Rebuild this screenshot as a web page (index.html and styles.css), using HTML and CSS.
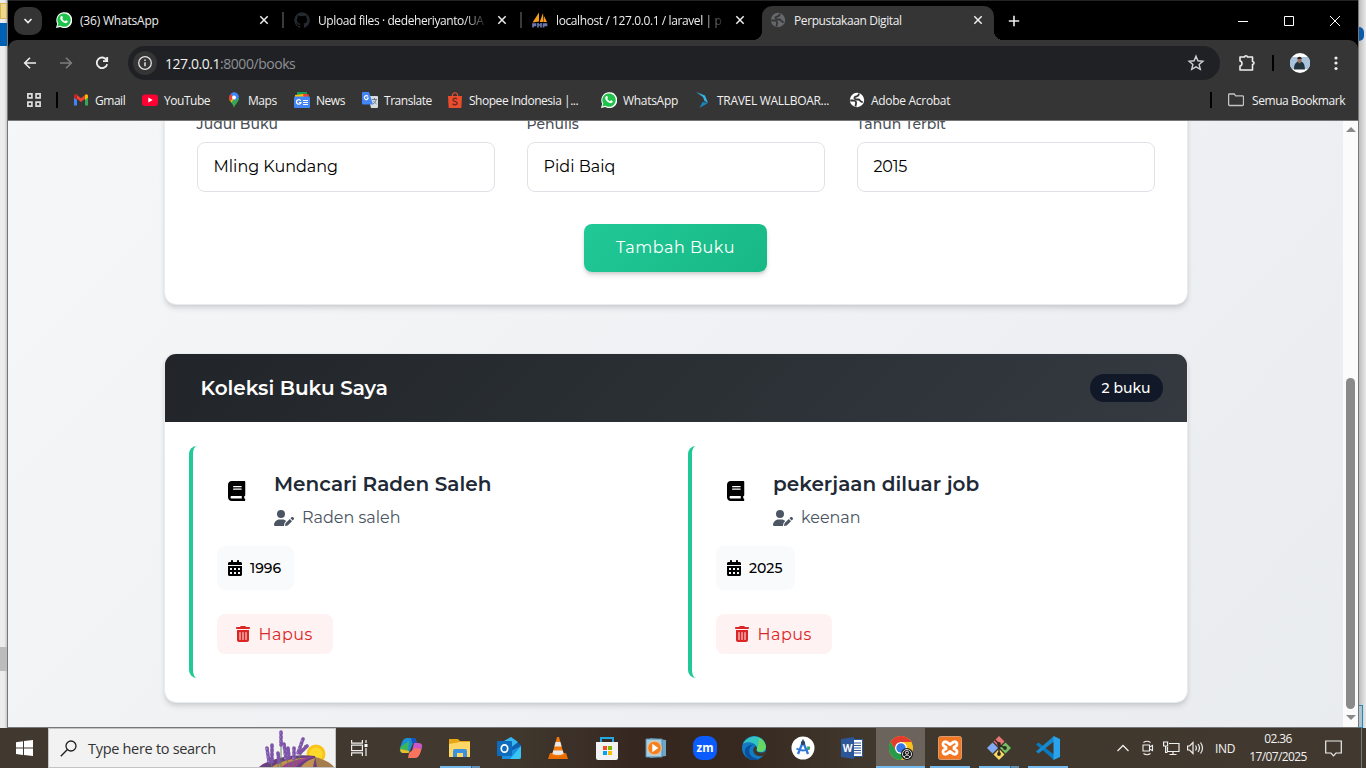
FILE: index.html
```html
<!DOCTYPE html>
<html lang="id">
<head>
<meta charset="utf-8">
<title>Perpustakaan Digital</title>
<link rel="stylesheet" href="styles.css">
</head>
<body>
<svg class="defs" width="0" height="0">
  <symbol id="book" viewBox="0 0 448 512"><path d="M96 0C43 0 0 43 0 96V416c0 53 43 96 96 96H384h32c17.700 0 32-14.300 32-32s-14.300-32-32-32V384c17.700 0 32-14.300 32-32V32c0-17.700-14.300-32-32-32H384 96zm0 384H352v64H96c-17.700 0-32-14.300-32-32s14.300-32 32-32zm32-240c0-8.800 7.200-16 16-16H336c8.800 0 16 7.200 16 16s-7.200 16-16 16H144c-8.800 0-16-7.200-16-16zm16 48H336c8.800 0 16 7.200 16 16s-7.200 16-16 16H144c-8.800 0-16-7.200-16-16s7.200-16 16-16z"/></symbol>
  <symbol id="user-pen" viewBox="0 0 640 512"><path d="M224 256A128 128 0 1 0 224 0a128 128 0 1 0 0 256zm-45.700 48C79.800 304 0 383.800 0 482.300C0 498.700 13.300 512 29.700 512H322.800c-3.100-8.800-3.700-18.400-1.400-27.800l15-60.100c2.800-11.300 8.600-21.500 16.800-29.700l40.300-40.300c-32.100-31-75.700-50.100-123.900-50.100H178.300zm435.500-68.300c-15.600-15.600-40.900-15.600-56.600 0l-29.400 29.400 71 71 29.400-29.400c15.600-15.600 15.600-40.900 0-56.600l-14.400-14.400zM375.900 417c-4.100 4.100-7 9.200-8.400 14.900l-15 60.100c-1.400 5.500 .2 11.200 4.200 15.200s9.700 5.600 15.200 4.200l60.100-15c5.600-1.400 10.800-4.300 14.900-8.400L576.100 358.700l-71-71L375.900 417z"/></symbol>
  <symbol id="calendar" viewBox="0 0 448 512"><path fill-rule="evenodd" d="M128 0c17.700 0 32 14.300 32 32V64H288V32c0-17.700 14.300-32 32-32s32 14.300 32 32V64h48c26.500 0 48 21.500 48 48v48H0V112C0 85.500 21.500 64 48 64H96V32c0-17.700 14.300-32 32-32zM0 192H448V464c0 26.500-21.500 48-48 48H48c-26.500 0-48-21.500-48-48V192zM64 256h64v64H64zM192 256h64v64h-64zM320 256h64v64h-64zM64 384h64v64H64zM192 384h64v64h-64zM320 384h64v64h-64z"/></symbol>
  <symbol id="trash" viewBox="0 0 448 512"><path fill-rule="evenodd" d="M135.200 17.700C140.600 6.800 151.700 0 163.800 0H284.200c12.100 0 23.200 6.800 28.600 17.700L320 32h96c17.700 0 32 14.300 32 32s-14.300 32-32 32H32C14.300 96 0 81.700 0 64S14.300 32 32 32h96zM32 128H416V448c0 35.300-28.700 64-64 64H96c-35.300 0-64-28.700-64-64zM112 208v224a16 16 0 0 0 32 0V208a16 16 0 0 0-32 0zM208 208v224a16 16 0 0 0 32 0V208a16 16 0 0 0-32 0zM304 208v224a16 16 0 0 0 32 0V208a16 16 0 0 0-32 0z"/></symbol>
  <symbol id="whatsapp" viewBox="0 0 16 16"><path fill="#fff" d="M0 16l1.200-4.200A8 8 0 1 1 4.200 15z"/><path fill="#1fc24a" d="M1.400 14.600l.9-3A6.700 6.700 0 1 1 4.500 13.800z"/><path fill="#fff" d="M5.300 4.100c.5-.3.900-.2 1.100.3l.5 1.200c.1.400-.5.900-.6 1.200.5 1.100 1.400 1.900 2.600 2.400.4 0 .8-1 1.200-.9l1.400.7c.5.300.1 1.400-.5 1.800-.7.500-1.700.5-2.800 0C6.300 9.900 4.800 8.300 4.300 6.800c-.3-1.100.2-2.200 1-2.700z"/></symbol>
  <symbol id="globe" viewBox="0 0 16 16"><circle cx="8" cy="8" r="7.200" fill="currentColor"/><path fill="none" stroke="var(--hole)" stroke-width="1.800" stroke-linejoin="round" d="M9.500 1.500c1 2-1 2.500-3 3.200C5 5.200 5 7 7 7.500h2.500c1.500 0 1.500 2.500 4.200 2.500M1.200 8.500h3.300c2 .5 3 1.500 2.500 3L6.500 14.500"/></symbol>
  <symbol id="close" viewBox="0 0 12 12"><path stroke="#eee" stroke-width="1.500" d="M2.300 2.300l7.400 7.400M9.700 2.300L2.300 9.700"/></symbol>
</svg>

<div class="workspace">
  <div class="behind behind-left"><i class="behind-folder"></i><i class="behind-blue"></i><i class="behind-gray"></i></div>

  <div class="window">
    <div class="tabstrip">
      <div class="tab-search"><svg width="12" height="12" viewBox="0 0 12 12"><path d="M2.500 4l3.500 3.500L9.500 4" fill="none" stroke="#eee" stroke-width="1.700"/></svg></div>
      <div class="tab"><svg class="i16"><use href="#whatsapp"/></svg><span class="tab-title chat">(36) WhatsApp</span><svg class="i12"><use href="#close"/></svg></div>
      <div class="tab"><svg class="i16" viewBox="0 0 16 16"><path fill="#24292f" d="M8 .3a8 8 0 0 0-2.500 15.500c.4.100.5-.2.500-.4v-1.500c-2.200.5-2.700-.9-2.700-.9-.4-.9-.9-1.200-.9-1.200-.7-.5.100-.5.100-.5.800.100 1.200.8 1.200.8.700 1.200 1.900.9 2.300.7.100-.5.300-.9.500-1.100-1.800-.2-3.600-.9-3.600-3.900 0-.9.300-1.600.8-2.200 0-.2-.3-1 .1-2.100 0 0 .7-.2 2.200.8a7.500 7.500 0 0 1 4 0c1.500-1 2.200-.8 2.200-.8.400 1.100.1 1.900.1 2.100.5.600.8 1.300.8 2.200 0 3-1.900 3.700-3.600 3.900.3.300.5.800.5 1.500v2.200c0 .2.100.5.600.4A8 8 0 0 0 8 .3z"/></svg><span class="tab-title fade">Upload files · dedeheriyanto/UA</span><svg class="i12"><use href="#close"/></svg></div>
      <div class="tab last"><svg class="i16" viewBox="0 0 16 16"><path fill="#f89c1c" d="M7 .5L.5 10.500 7 9.500zM11 1L7.700 10h4zM12 4v6h3z"/><path fill="none" stroke="#6c78af" stroke-width="1.700" d="M1 15.500v-3.500h2.500v1.500H1M6 11v4.500M6 13h3v2.500M9 13v-2M11.500 15.500v-3.500h3v1.500h-3"/></svg><span class="tab-title fade">localhost / 127.0.0.1 / laravel | p</span><svg class="i12"><use href="#close"/></svg></div>
      <div class="tab active"><svg class="i16 globe-dim"><use href="#globe"/></svg><span class="tab-title">Perpustakaan Digital</span><svg class="i12"><use href="#close"/></svg></div>
      <svg class="new-tab" width="12" height="12" viewBox="0 0 12 12"><path stroke="#eee" stroke-width="1.600" d="M6 .8v10.400M.8 6h10.400"/></svg>
      <div class="controls">
        <svg width="12" height="12" viewBox="0 0 12 12"><path stroke="#fff" d="M1 6.500h10"/></svg>
        <svg width="12" height="12" viewBox="0 0 12 12"><path fill="none" stroke="#fff" d="M1.500 1.500h9v9h-9z"/></svg>
        <svg width="12" height="12" viewBox="0 0 12 12"><path stroke="#fff" d="M1 1l10 10M11 1L1 11"/></svg>
      </div>
    </div>

    <div class="chrome">
      <div class="toolbar">
        <div class="nav">
          <svg width="16" height="16" viewBox="0 0 16 16"><path fill="none" stroke="#eee" stroke-width="1.600" d="M14 8H3M8 2.700L2.700 8 8 13.300"/></svg>
          <svg width="16" height="16" viewBox="0 0 16 16"><path fill="none" stroke="#7d7d7d" stroke-width="1.600" d="M2 8h11M8 2.700L13.300 8 8 13.300"/></svg>
          <svg width="16" height="16" viewBox="0 0 16 16"><path fill="none" stroke="#eee" stroke-width="1.800" d="M12.600 5A5.300 5.300 0 1 0 13.200 9.200M13.200 2v4.200H9"/></svg>
        </div>
        <div class="omnibox">
          <span class="info"><svg width="16" height="16" viewBox="0 0 16 16"><circle cx="8" cy="8" r="6.300" fill="none" stroke="#e3e3e3" stroke-width="1.300"/><path stroke="#e3e3e3" stroke-width="1.500" d="M8 7.200v4M8 4.500V6"/></svg></span>
          <span class="url">127.0.0.1<span>:8000/books</span></span>
          <svg width="18" height="18" viewBox="0 0 18 18"><path fill="none" stroke="#d0d0d0" stroke-width="1.400" d="M9 2.200l1.900 4.600 5 .4-3.800 3.300 1.200 4.900L9 12.800l-4.300 2.600 1.200-4.900L2.100 7.200l5-.4z"/></svg>
        </div>
        <svg class="ext" width="18" height="18" viewBox="0 0 18 18"><path fill="none" stroke="#eee" stroke-width="1.600" stroke-linejoin="round" d="M2 3h4.500c.3-1.700 2.700-1.700 3 0H14.500v4.500c2 .3 2 2.700 0 3V16H2v-4c2.600-.3 2.600-4.700 0-5z"/></svg>
        <i class="sep"></i>
        <svg class="avatar" width="20" height="20" viewBox="0 0 20 20"><circle cx="10" cy="10" r="10" fill="#fff"/><path fill="#a9c3dc" d="M2 4h16a10 10 0 0 1 0 12H2a10 10 0 0 1 0-12z"/><path fill="#24343d" d="M4 16.500c0-5 1.500-7 4-8h3c3 1 3.500 3 4 8z"/><path fill="#9c7062" d="M7.500 5h4v3.500l-2 2-2-2z"/><path fill="#2b2224" d="M7.300 6c0-3 4.400-3 4.400 0z"/></svg>
        <svg class="menu" width="4" height="16" viewBox="0 0 4 16" fill="#eee"><circle cx="2" cy="3" r="1.600"/><circle cx="2" cy="8" r="1.600"/><circle cx="2" cy="13.500" r="1.600"/></svg>
      </div>
      <div class="bookmarks">
        <svg class="apps" width="14" height="14" viewBox="0 0 14 14"><path fill="none" stroke="#ddd" stroke-width="1.700" d="M.9.900h4v4h-4zM9.100.900h4v4h-4zM.9 9.100h4v4h-4zM9.100 9.100h4v4h-4z"/></svg>
        <i class="sep"></i>
        <div class="bm-list">
          <span class="bm"><svg class="i16" viewBox="0 0 16 16"><path fill="#4285f4" d="M1 4v9.500h3V7z"/><path fill="#34a853" d="M15 4v9.500h-3V7z"/><path fill="#ea4335" d="M1 4.500C1 2.500 2.500 2 4 3l4 3.200L12 3c1.500-1 3-.5 3 1.500L8 10z"/><path fill="#fbbc04" d="M12 3c1.500-1 3-.5 3 1.500v1L12 8z"/><path fill="#c5221f" d="M1 4.500C1 2.500 2.500 2 4 3v5L1 5.700z"/></svg>Gmail</span>
          <span class="bm"><svg class="i16" viewBox="0 0 16 16"><rect y="2.500" width="16" height="11.500" rx="3" fill="#ff0033"/><path fill="#fff" d="M6.300 5.500v5L10.700 8z"/></svg>YouTube</span>
          <span class="bm"><svg class="i16" viewBox="0 0 16 16"><path fill="#34a853" d="M3 7c1 3 4 4.500 5 9 1-4 5-6 5-10z"/><path fill="#fbbc04" d="M3.200 7.500l6-3L5.500 10.500z"/><path fill="#ea4335" d="M3 6c0-2 .5-3 1.700-4L8.500 5 4 9.500z"/><path fill="#4285f4" d="M4.700 2C7-1 12.500 0 13 5l-3.600 4L6 4z"/><circle cx="8" cy="5.500" r="2" fill="#fff"/></svg>Maps</span>
          <span class="bm"><svg class="i16" viewBox="0 0 16 16"><path fill="#0f9d58" d="M3 0h10v6H3z"/><path fill="#ea4335" d="M9 1.500l6 1-1 5H8z"/><path fill="#fbbc04" d="M1 3l8-1 1 5H1z"/><rect y="4.500" width="16" height="11.500" rx="1" fill="#4285f4"/><path fill="none" stroke="#fff" stroke-width="1.200" d="M6.800 8.800A2.300 2.300 0 1 0 7 10.500H5M9 8.500h5M9 10.500h5M9 12.500h5"/></svg>News</span>
          <span class="bm"><svg class="i16" viewBox="0 0 16 16"><path fill="#d8dce1" d="M6 4h9a1 1 0 0 1 1 1v10a1 1 0 0 1-1 1H9z"/><path fill="#4285f4" d="M1 0h6l4 12.500H1a1 1 0 0 1-1-1V1a1 1 0 0 1 1-1z"/><path fill="none" stroke="#fff" stroke-width="1.100" d="M6 4.500A2 2 0 1 0 6.300 6H4.600"/><path fill="none" stroke="#667a8c" d="M10 7.500h5M12.500 6v1.500M14 8c-.5 2-1.500 3-3 4M11.500 9c.5 1 1.500 2 3 3"/></svg>Translate</span>
          <span class="bm"><svg class="i16" viewBox="0 0 16 16"><path fill="#ee4d2d" d="M1 4h14l-.7 12H1.700z"/><path fill="none" stroke="#ee4d2d" stroke-width="1.200" d="M5.300 4.500c0-5 5.400-5 5.400 0"/><path fill="none" stroke="#6d2b22" stroke-width="1.400" d="M10 7c-2-1.500-4.200-.5-4 .8.200 1.700 4 1.300 4.200 3.200.2 1.800-2.700 2.500-4.700.9"/></svg>Shopee Indonesia |...</span>
          <span class="bm loose"><svg class="i16"><use href="#whatsapp"/></svg>WhatsApp</span>
          <span class="bm loose"><svg class="i16" viewBox="0 0 16 16"><path fill="#35b4e5" d="M1 0l9 3.500 3 7.500-3.500-2L8 5z"/><path fill="#1687bd" d="M13 11l-8.500 5 3-6z"/></svg>TRAVEL WALLBOAR...</span>
          <span class="bm loose"><svg class="i16 globe-white"><use href="#globe"/></svg>Adobe Acrobat</span>
        </div>
        <i class="sep"></i>
        <span class="bm all"><svg width="16" height="14" viewBox="0 0 16 14"><path fill="none" stroke="#c4c4c4" stroke-width="1.300" d="M1.500 1h4.700l1.500 1.800h6.800q1 0 1 1v7.700q0 1-1 1h-13q-.9 0-.9-1V2q0-1 .9-1z"/></svg>Semua Bookmark</span>
      </div>
    </div>

    <div class="viewport">
      <main class="page">
        <section class="card form-card">
          <div class="fields">
            <label class="field"><span>Judul Buku</span><div class="input">Mling Kundang</div></label>
            <label class="field"><span>Penulis</span><div class="input">Pidi Baiq</div></label>
            <label class="field"><span>Tahun Terbit</span><div class="input year-input">2015</div></label>
          </div>
          <div class="add">Tambah Buku</div>
        </section>

        <section class="card">
          <header class="card-head"><h2>Koleksi Buku Saya</h2><span class="count">2 buku</span></header>
          <div class="books">
            <article class="book">
              <div class="book-top">
                <svg class="book-icon"><use href="#book"/></svg>
                <div><h3>Mencari Raden Saleh</h3><p><svg class="pen"><use href="#user-pen"/></svg>Raden saleh</p></div>
              </div>
              <div class="year"><svg class="fa16"><use href="#calendar"/></svg>1996</div>
              <div class="delete"><svg class="fa16"><use href="#trash"/></svg>Hapus</div>
            </article>
            <article class="book">
              <div class="book-top">
                <svg class="book-icon"><use href="#book"/></svg>
                <div><h3>pekerjaan diluar job</h3><p><svg class="pen"><use href="#user-pen"/></svg>keenan</p></div>
              </div>
              <div class="year wide"><svg class="fa16"><use href="#calendar"/></svg>2025</div>
              <div class="delete"><svg class="fa16"><use href="#trash"/></svg>Hapus</div>
            </article>
          </div>
        </section>
      </main>
      <div class="scrollbar">
        <svg width="10" height="5" viewBox="0 0 10 5"><path fill="#8a8a8a" d="M0 5l5-5 5 5z"/></svg>
        <i class="thumb"></i>
        <svg width="10" height="5" viewBox="0 0 10 5"><path fill="#8a8a8a" d="M0 0h10L5 5z"/></svg>
      </div>
    </div>
  </div>

  <div class="behind behind-right"><i class="behind-dot"></i><i class="behind-frame"></i></div>
</div>

<div class="taskbar">
  <div class="start"><svg width="17" height="16" viewBox="0 0 17 16"><path fill="#fff" d="M0 2.200l7-1v6.400H0zM8 1l9-1v7.600H8zM0 8.600h7V15l-7-1zM8 8.600h9V16l-9-1z"/></svg></div>
  <div class="search">
    <svg width="17" height="17" viewBox="0 0 17 17"><circle cx="11" cy="6" r="5" fill="none" stroke="#222" stroke-width="1.300"/><path stroke="#222" stroke-width="1.400" d="M7.400 9.600L.8 16.200"/></svg>
    <span>Type here to search</span>
    <svg class="lavender" width="76" height="38" viewBox="0 0 76 38">
      <circle cx="57" cy="25" r="9.500" fill="#f9c51b"/><circle cx="57" cy="25" r="6.500" fill="#fdda2a"/>
      <path fill="#a57c4b" d="M36 38c6-10 18-12 26-8 6 2 11 5 13 8z"/>
      <path fill="#68407f" d="M0 38c10-9 36-14 56-11l2 11z"/>
      <path fill="#a03f96" d="M24 38c6-6 18-10 31-10-9 2-15 6-18 10z"/><path fill="#c19053" d="M13 38c8-6 20-9 34-9-12 2-20 5-24 9zM42 38c3-4 7-7 14-9l-2 9z"/>
      <path stroke="#5d8147" stroke-width=".9" fill="none" d="M22 38V10M13 38L8 22M19 38l1-10M30 38l-4-18M34 38l1-16M37 36l9-20"/>
      <g stroke="#7d55a8" stroke-width="3.600" stroke-linecap="round" stroke-dasharray="2 2.200"><path d="M22 3v13M8 19l2 14M13 16v17M19 24l1 9M25 15l2 15M29 19l1 9M35 19v11M44 10l-5 14M48 17l-7 7"/></g>
      <g stroke="#b088d2" stroke-width="1.300" stroke-dasharray="1.500 2.700"><path d="M21 3v13M7.500 19l2 14M24 16l2 14M43 11l-5 13M34 20v10"/></g>
    </svg>
  </div>
  <div class="task view"><svg width="18" height="16" viewBox="0 0 18 16"><path fill="none" stroke="#eee" stroke-width="1.200" d="M.6 0v3.200h10.800V0M.6 16v-3.200h10.800V16M.6 5.200h10.800v5.400H.6zM15 0v3M15 8v8"/><path fill="#fff" d="M13.500 4h3v3h-3z"/></svg></div>
  <div class="task"><svg width="24" height="24" viewBox="0 0 24 24"><path fill="#198fd8" d="M8 2h8l2 5h-4l-4 10H5c-4 0-5-2-3.500-6C3 6 4 2 8 2z"/><path fill="#3bb55b" d="M1.800 10.500L10 5 9 17H5c-4 0-4.500-3-3.200-6.500z"/><path fill="#f0bc24" d="M1.600 13l8.500 2-.5 2H5c-3 0-4-2-3.400-4z"/><path fill="#ca57c8" d="M15 7h4c4 0 5 2 3.500 6-2 6-3 9-7 9h-6l3-5z"/><path fill="#f9745d" d="M22.500 13c-2 6-3 9-7 9H9l1-5 6-5z"/><path fill="#1753c4" d="M12 2h4l2 5h-5z"/></svg></div>
  <div class="task run split"><svg width="24" height="22" viewBox="0 0 24 22"><path fill="#e9a614" d="M1 2h9l2 2h10v5H1z"/><path fill="#ffd766" d="M1 7l11-2h10v15H1z"/><path fill="#3991df" d="M5 20v-6q0-2 2-2h10q2 0 2 2v6h-4v-4H9v4z"/></svg></div>
  <div class="task"><svg width="26" height="24" viewBox="0 0 26 24"><path fill="#0e5fae" d="M4 9L15 1l10 8v7H4z"/><path fill="#35b8f1" d="M8 5l7-4 7 5-10 8z"/><path fill="#1b8fe0" d="M25 10v11q0 2-2 2H6v-4z"/><path fill="#38c6f4" d="M25 10v11q0 2-2 2h-9z"/><rect x="1" y="5" width="15" height="15" rx="1" fill="#0f6cbd"/><ellipse cx="8.500" cy="12.500" rx="3.200" ry="3.700" fill="none" stroke="#fff" stroke-width="1.700"/></svg></div>
  <div class="task"><svg width="22" height="24" viewBox="0 0 22 24"><path fill="#eb6d00" d="M3 17h16l2 6H1z"/><path fill="#f47a0a" d="M10 1h2l5 18q-6 3-12 0z"/><path fill="#e9e9e9" d="M8.600 6h4.800l1.200 4.500H7.400zM6.200 14.500h9.600l.8 3.500q-5.500 2-11.200 0z"/></svg></div>
  <div class="task"><svg width="24" height="25" viewBox="0 0 24 25"><path fill="none" stroke="#23a9e1" stroke-width="2" d="M6 7V2h12v5"/><path fill="#f2f2f2" d="M1 6h22v16q0 2-2 2H3q-2 0-2-2z"/><path fill="#f25022" d="M8 10h4v4H8z"/><path fill="#7fba00" d="M13 10h4v4h-4z"/><path fill="#00a4ef" d="M8 15h4v4H8z"/><path fill="#ffb900" d="M13 15h4v4h-4z"/></svg></div>
  <div class="task"><svg width="22" height="22" viewBox="0 0 22 22"><path fill="#6ca6c8" d="M5 1l16 2v16L5 21z"/><path fill="#a6d0e6" d="M1 2h16v18H1z" stroke="#598ba9"/><circle cx="9.500" cy="11" r="6.800" fill="#f5801f" stroke="#f8c393"/><path fill="#fff" d="M7.300 6.700v8.600l6-4.300z"/></svg></div>
  <div class="task"><svg width="24" height="24" viewBox="0 0 24 24"><rect width="24" height="24" rx="9" fill="#0b5cff"/><text x="12" y="15.500" text-anchor="middle" class="zm">zm</text></svg></div>
  <div class="task"><svg width="24" height="24" viewBox="0 0 24 24"><circle cx="12" cy="12" r="12" fill="#137bc4"/><path fill="#34c5c2" d="M1 8C6-3 23-2 24 11c0 5-5 6-9 4 2-8-9-11-14-7z"/><path fill="#68d860" d="M17 2c6 3 8 9 6 11-2 3-6 3-8 2 0-5 2-6 2-13z"/><path fill="#0b4f98" d="M9 10c-5 7 1 13 8 13-8 4-15-2-14-9 1-5 7-6 10-5-2 0-3 0-4 1z"/><path fill="#3e352c" d="M14 10c2 3-1 4 1 5.500 2 1.500 5 1.500 9 0l.5 2c-2 2-5 3-8 2.500-6-1-7-8-2.500-10z"/></svg></div>
  <div class="task"><svg width="24" height="24" viewBox="0 0 24 24"><circle cx="12" cy="12" r="11.500" fill="#fff"/><path fill="none" stroke="#3077da" stroke-width="2.300" d="M11.500 7L7 18M12.500 7l4.500 11"/><path fill="none" stroke="#3077da" stroke-width="2" d="M5.500 12.500q6.500 4 13 0"/><circle cx="12" cy="7" r="2.200" fill="#27476e"/><path stroke="#27476e" stroke-width="1.500" d="M12 3.500v3"/><path fill="#34a853" d="M16 10.500h3v2.500l-2.500 1z"/></svg></div>
  <div class="task"><svg width="24" height="24" viewBox="0 0 24 24"><path fill="#fff" stroke="#2b579a" d="M12 3.500h10.500v17H12z"/><path stroke="#2b579a" stroke-width="1.200" d="M14 7h7M14 9.500h7M14 12h7M14 14.500h7M14 17h7"/><path fill="#2b579a" d="M1 3l13-2v22L1 21z"/><text x="7.500" y="15.800" text-anchor="middle" class="word">W</text></svg></div>
  <div class="task run focus"><svg width="24" height="24" viewBox="0 0 24 24"><circle cx="12" cy="12" r="12" fill="#fbc116"/><path fill="#e33b2e" d="M1.600 6A12 12 0 0 1 22.400 6H12l-5 9z"/><path fill="#269b4b" d="M1.600 6A12 12 0 0 0 12 24l5-9-10 0z"/><circle cx="12" cy="12" r="6" fill="#fff"/><circle cx="12" cy="12" r="4.700" fill="#3578e5"/><circle cx="18" cy="18" r="6" fill="#191919"/><circle cx="18" cy="18" r="4.500" fill="none" stroke="#ddd"/><circle cx="18" cy="16.700" r="1.600" fill="none" stroke="#ddd"/><path fill="none" stroke="#ddd" d="M15 21q3-4 6 0"/></svg></div>
  <div class="task run"><svg width="24" height="24" viewBox="0 0 24 24"><rect x=".5" y=".5" width="23" height="23" rx="2" fill="#f37623" stroke="#d99b70"/><path fill="none" stroke="#fff" stroke-width="2.800" stroke-linejoin="round" d="M8 11C3 10 5 4.500 8.500 6L12 8.500l3.500-2.500C19 4.500 21 10 16 11v2c5 1 3 6.500-.5 5L12 15.500 8.500 18C5 19.500 3 14 8 13z"/></svg></div>
  <div class="task run split"><svg width="24" height="24" viewBox="0 0 24 24"><path fill="#e87575" d="M12 0l5.500 5.500L12 11 6.500 5.500z"/><path fill="#82aaf4" d="M5.500 6.500L11 12l-5.500 5.500L0 12z"/><path fill="#76c164" d="M18.500 6.500L24 12l-5.500 5.500L13 12z"/><path fill="#f6da65" d="M12 13l5.500 5.500L12 24l-5.500-5.500z"/><path fill="none" stroke="#302b24" stroke-width="1.500" d="M8 4l4 4v10M12 9l6 3"/><g fill="#302b24"><circle cx="12" cy="8" r="1.900"/><circle cx="18" cy="12" r="1.900"/><circle cx="12" cy="18" r="1.900"/></g></svg></div>
  <div class="task run"><svg width="24" height="24" viewBox="0 0 24 24"><path fill="#0b79bd" d="M0 8.500L2.500 6.500 18 18.500V24z"/><path fill="#1689cf" d="M0 15.500l2.500 2L18 5.500V0z"/><path fill="#29a3ee" d="M17.500 0L24 3v18l-6.500 3z"/></svg></div>

  <div class="tray">
    <svg width="12" height="8" viewBox="0 0 12 8"><path fill="none" stroke="#eee" stroke-width="1.300" d="M.5 7L6 1.500 11.500 7"/></svg>
    <svg class="cam" width="12" height="16" viewBox="0 0 12 16"><path fill="none" stroke="#eee" stroke-width="1.100" d="M1.500 2.500Q5 0 8.500 2.500M1.500 13.500Q5 16 8.500 13.500M1 5h6.500v6H1zM7.500 7l3-1.500v5L7.500 9"/></svg>
    <svg class="net" width="17" height="15" viewBox="0 0 17 15"><path fill="none" stroke="#eee" stroke-width="1.200" d="M6 2.500h10v8H4.500V6M10 10.500v3M6.500 13.500h7M.6 1h4v4h-4zM2.600 5v6.500H4.500"/></svg>
    <svg class="vol" width="17" height="14" viewBox="0 0 17 14"><path fill="none" stroke="#eee" stroke-width="1.200" d="M.6 5h2L6 1.500v11L2.600 9h-2zM8.500 4.500q1.800 2.500 0 5M11 3q3 4 0 8M13.500 1.500q4 5.500 0 11"/></svg>
    <span class="lang">IND</span>
    <span class="clock"><span>02.36</span><span>17/07/2025</span></span>
    <svg class="note" width="17" height="17" viewBox="0 0 17 17"><path fill="none" stroke="#eee" stroke-width="1.200" d="M.7 1h15.600v12H11l-2.500 2.800L6 13H.7z"/></svg>
  </div>
</div>
</body>
</html>
```
FILE: styles.css
```css
* { box-sizing: border-box; }
body { margin: 0; width: 1366px; height: 768px; overflow: hidden; font-family: "Open Sans", "Noto Sans", sans-serif; font-size: 12px; white-space: nowrap; }
svg { display: block; flex: none; }
.defs { position: absolute; }
.i16 { width: 16px; height: 16px; }
.i12 { width: 12px; height: 12px; }

.workspace { display: flex; height: 728px; background: #e3e3e3; }
.behind { width: 8px; flex: none; display: flex; flex-direction: column; }
.behind-left { background: linear-gradient(90deg, #ececec 60%, #c9c9c9); border-right: 1px solid #777; }
.behind-folder { width: 7px; height: 16px; margin-top: 3px; background: #eed98b; border: 1px solid #d6b656; }
.behind-blue { height: 23px; margin-top: 4px; background: #0060b3; }
.behind-gray { height: 24px; margin-top: 601px; background: #bcbcbc; }
.behind-right { background: linear-gradient(90deg, #bdbdbd, #e9e9e9); border-left: 1px solid #777; }
.behind-dot { width: 5px; height: 14px; margin-top: 27px; border-radius: 0 7px 7px 0; background: #0b5ba8; }
.behind-frame { width: 4px; height: 24px; margin-top: 664px; border: 1px solid #258bb6; border-left: 0; background: #acc5d0; }

.window { width: 1350px; flex: none; display: flex; flex-direction: column; background: #000; }
.tabstrip { height: 40px; flex: none; display: flex; align-items: center; border-top: 1px solid #242424; color: #eee; letter-spacing: -0.4px; }
.tab-search { width: 28px; height: 28px; margin: 0 4px 0 6px; border-radius: 10px; background: #343434; display: grid; place-items: center; }
.tab { width: 238px; height: 34px; display: flex; align-items: center; padding: 0 14px 6px 10px; margin-top: 5px; gap: 8px; position: relative; }
.tab:not(.active):not(.last)::after { content: ""; position: absolute; right: 0; top: 6px; width: 2px; height: 16px; background: #3a3a3a; }
.tab-title { width: 170px; margin-right: 2px; }
.chat { letter-spacing: -.2px; }
.fade { -webkit-mask-image: linear-gradient(90deg, #000 87%, transparent 101%); mask-image: linear-gradient(90deg, #000 87%, transparent 101%); }
.tab.active { width: 232px; margin-left: 2px; padding: 0 10px 6px 8px; background: #353535; border-radius: 10px 10px 0 0; }
.tab.active::before, .tab.active::after { content: ""; position: absolute; bottom: 0; width: 9px; height: 9px; }
.tab.active::before { left: -9px; background: radial-gradient(circle at 0 0, transparent 9px, #353535 9px); }
.tab.active::after { right: -9px; background: radial-gradient(circle at 100% 0, transparent 9px, #353535 9px); }
.globe-dim { color: #66686c; --hole: #353535; }
.globe-white { color: #fff; --hole: #353535; }
.new-tab { margin-left: 14px; }
.controls { margin-left: auto; width: 138px; display: flex; justify-content: space-around; }

.chrome { height: 81px; flex: none; background: #353535; border-bottom: 1px solid #777; border-radius: 9px 9px 0 0; }
.toolbar { height: 46px; display: flex; align-items: center; padding: 0 20px 0 14px; }
.nav { display: flex; gap: 20px; width: 106px; }
.omnibox { width: 1092px; height: 34px; display: flex; align-items: center; border-radius: 17px; background: #202124; padding: 0 15px 0 5px; }
.info { width: 24px; height: 24px; border-radius: 50%; background: #353535; display: grid; place-items: center; }
.url { flex: 1; margin-left: 8px; font-size: 14px; letter-spacing: -0.45px; color: #f1f1f1; }
.url span { color: #8f9194; }
.ext { margin-left: 18px; }
.sep { width: 2px; height: 16px; background: #000; }
.toolbar .sep { margin-left: 16px; }
.avatar { margin-left: 16px; }
.menu { margin-left: auto; }
.bookmarks { height: 28px; display: flex; align-items: center; padding: 0 0 0 19px; color: #f1f1f1; letter-spacing: -0.47px; }
.bookmarks .sep { margin-left: 15px; flex: none; }
.bm-list { display: grid; flex: none; grid-template-columns: 69px 84px 68px 68px 85px 154px 94px 154px 120px; margin: 0 241px 0 15px; }
.bm { display: flex; align-items: center; gap: 6px; }
.loose { letter-spacing: -.3px; }
.bookmarks .bm-list + .sep { margin-left: 0; }
.all { margin-left: 16px; gap: 8px; letter-spacing: -.42px; }

.viewport { height: 607px; display: flex; overflow: hidden; border-bottom: 1px solid #777; }
.page { width: 1335px; background: linear-gradient(135deg, #f8f9fa, #e9ecef) bottom / 1335px 1053px no-repeat; padding: 0 155.5px; font-family: Montserrat, Inter, sans-serif; }
.card { width: 1024px; border: 1px solid #e9ecef; border-radius: 12px; background: #fff; background-clip: padding-box; overflow: hidden; box-shadow: 0 4px 6px -1px rgba(0,0,0,.12), 0 2px 4px -1px rgba(0,0,0,.07); }
.form-card { margin: -40px 0 48px; padding: 32px; height: 224px; }
.fields { display: grid; grid-template-columns: repeat(3, 1fr); gap: 32px; }
.field { display: flex; flex-direction: column; gap: 8px; font-size: 14px; line-height: 20px; font-weight: 500; color: #495057; }
.input { height: 50px; border: 1px solid #dee2e6; border-radius: 8px; padding: 0 16px; font-size: 16px; font-weight: 400; line-height: 48px; color: #000; }
.year-input { letter-spacing: -.2px; }
.add { width: 183px; height: 48px; margin: 32px auto 0; border-radius: 8px; background: linear-gradient(135deg, #20c997, #18b885); color: #fff; font-size: 16px; line-height: 47px; text-align: center; letter-spacing: .5px; box-shadow: 0 4px 6px -1px rgba(0,0,0,.12), 0 2px 3px rgba(0,0,0,.1); }
.card-head { height: 68px; padding: 0 24px 0 36px; display: flex; align-items: center; justify-content: space-between; background: linear-gradient(135deg, #212529, #343a40); color: #fff; }
h2, h3, p { margin: 0; }
h2 { font-size: 20px; font-weight: 600; }
.count { width: 73px; height: 28px; border-radius: 14px; background: #111827; font-size: 14px; font-weight: 500; line-height: 28px; text-align: center; }
.books { padding: 24px; display: grid; grid-template-columns: 1fr 1fr; gap: 24px; }
.book { height: 232px; padding: 24px; border-left: 4px solid #20c997; border-radius: 8px; }
.book-top { display: flex; height: 76px; }
.book-icon { width: 17.5px; height: 20px; margin: 11px 28.5px 0 11.5px; }
h3 { font-size: 20px; font-weight: 600; line-height: 28px; color: #212936; }
p { display: flex; align-items: center; gap: 8px; margin-top: 8px; font-size: 16px; line-height: 24px; color: #4b5563; }
.pen { width: 20px; height: 16px; fill: #4b5563; }
.fa16 { width: 14px; height: 16px; fill: currentColor; }
.year { width: 77.5px; height: 44px; padding-left: 11.5px; display: flex; align-items: center; gap: 8px; border-radius: 8px; background: #f9fafb; font-size: 14px; font-weight: 500; color: #000; }
.year.wide { width: 79px; }
.delete { width: 116px; height: 40px; margin-top: 24px; padding-left: 19.5px; display: flex; align-items: center; gap: 8.5px; border-radius: 8px; background: #fef2f2; color: #dc2626; font-size: 16px; letter-spacing: .5px; }
.scrollbar { width: 15px; background: #fbfbfb; display: flex; flex-direction: column; align-items: center; padding-top: 6px; }
.thumb { width: 9px; height: 331px; margin: 246px 0 6px; border-radius: 5px; background: #8a8a8a; }

.taskbar { height: 40px; display: flex; background: linear-gradient(90deg, #41382f 0, #41392f 500px, #35261f 650px, #37291f 740px, #40372d 860px, #41392f); color: #f2f2f2; }
.start { width: 48px; display: grid; place-items: center; }
.search { width: 288px; border: 1px solid #c4c4c4; background: #f2f2f2; display: flex; align-items: center; padding-left: 11px; color: #333; font-size: 14.5px; letter-spacing: -.3px; }
.search span { margin-left: 11px; width: 171px; }
.lavender { align-self: flex-end; }
.task { width: 49px; display: grid; place-items: center; position: relative; }
.task.view { width: 48px; margin-right: 2px; }
.run::after { content: ""; position: absolute; left: 5px; bottom: 0; width: 40px; height: 2px; background: #76b9ed; }
.split::after { background: linear-gradient(90deg, #76b9ed 31px, #3e5f78 31px, #3e5f78 32px, #6090b4 32px); }
.focus { background: #6b645d; }
.focus::after { left: 0; width: 49px; }
.zm { font: 700 11.5px "Open Sans", sans-serif; fill: #fff; }
.word { font: 700 10px "Open Sans", sans-serif; fill: #fff; }
.tray { display: flex; align-items: center; margin-left: 45px; width: 245px; border-right: 1px solid #777; }
.cam { margin-left: 13px; }
.net { margin-left: 8.5px; }
.vol { margin-left: 7.5px; }
.lang { margin-left: 11px; width: 21px; letter-spacing: -.3px; }
.clock { margin-left: 11px; width: 62px; text-align: center; display: flex; flex-direction: column; line-height: 18px; letter-spacing: -.6px; }
.note { margin-left: 15.5px; }
```
